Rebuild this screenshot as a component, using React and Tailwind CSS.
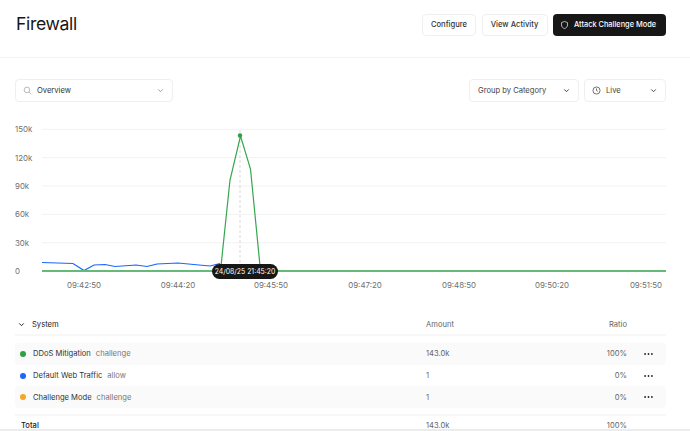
import React from "react";

const font = { fontFamily: "Inter, 'Liberation Sans', sans-serif" };
const ys = [["150k", 129.3], ["120k", 157.7], ["90k", 186], ["60k", 214.3], ["30k", 242.7], ["0", 271]];
const xs = [["09:42:50", 84], ["09:44:20", 178], ["09:45:50", 271], ["09:47:20", 365], ["09:48:50", 459], ["09:50:20", 552], ["09:51:50", 646]];
const rows = [
  { dot: "bg-[#2ea043]", name: "DDoS Mitigation", tag: "challenge", amount: "143.0k", ratio: "100%", shade: true },
  { dot: "bg-[#1a66ff]", name: "Default Web Traffic", tag: "allow", amount: "1", ratio: "0%", shade: false },
  { dot: "bg-[#f5a623]", name: "Challenge Mode", tag: "challenge", amount: "1", ratio: "0%", shade: true },
];

function Chevron({ className }) {
  return (
    <svg viewBox="0 0 10 10" className={className} fill="none" stroke="currentColor" strokeWidth="1.1">
      <path d="M2.5 3.8 5 6.3 7.5 3.8" />
    </svg>
  );
}

function Dots() {
  return (
    <svg viewBox="0 0 10 4" className="w-[9px] h-[4px] text-[#222]" fill="currentColor">
      <circle cx="1.2" cy="2" r="1" />
      <circle cx="5" cy="2" r="1" />
      <circle cx="8.8" cy="2" r="1" />
    </svg>
  );
}

function Chart() {
  return (
    <svg width="690" height="180" viewBox="0 120 690 180" className="block" style={font}>
      {ys.map(([l, y]) => (
        <g key={l}>
          <line x1="42" x2="666" y1={y} y2={y} stroke="#f2f2f2" strokeWidth="1" />
          <text x="15" y={y + 3} fontSize="7.9" fill="#707070">{l}</text>
        </g>
      ))}
      {xs.map(([l, x]) => (
        <text key={l} x={x} y="288" fontSize="7.9" textAnchor="middle" fill="#707070">{l}</text>
      ))}
      <line x1="240" x2="240" y1="130" y2="264" stroke="#d9d9d9" strokeWidth="1" strokeDasharray="3 2" />
      <polyline
        fill="none"
        stroke="#1a66ff"
        strokeWidth="1.2"
        points="42,262.5 73,263.5 84,270.5 94,265 105,264.5 115,266.5 136,265 147,266.5 157,264 178,263 199,265 210,266 220,263.5"
      />
      <polyline
        fill="none"
        stroke="#35a64c"
        strokeWidth="1.2"
        points="220.5,271 230,180 240.5,136 250.5,169 260.5,271"
      />
      <line x1="42" x2="666" y1="271" y2="271" stroke="#66ba78" strokeWidth="2" />
      <circle cx="240" cy="135.5" r="2.2" fill="#2ea043" />
    </svg>
  );
}

export default function App() {
  return (
    <div className="relative w-[690px] h-[431px] overflow-hidden bg-white text-[#171717]" style={font}>
      <header className="h-[58px] border-b border-[#f2f2f2] pl-4 pr-6 flex items-start justify-between">
        <h1 className="text-[17.6px] leading-[24px] mt-[12px] font-normal tracking-[-0.02em]">Firewall</h1>
        <div className="flex items-center gap-[5.5px] mt-[14px]">
          <button className="w-[54px] h-[22px] rounded border border-[#efefef] text-[7.6px] font-medium text-[#333]">Configure</button>
          <button className="w-[66px] h-[22px] rounded border border-[#efefef] text-[7.6px] font-medium text-[#333]">View Activity</button>
          <button className="w-[113px] h-[22px] rounded bg-[#171717] text-white text-[7.4px] font-medium flex items-center pl-[7px] gap-[5px] whitespace-nowrap">
            <svg viewBox="0 0 24 24" className="w-[9px] h-[10px] shrink-0" fill="none" stroke="#d4d4d4" strokeWidth="2.2">
              <path d="M12 2.5 4 5.5v6.5c0 5 3.5 8 8 9.5 4.5-1.5 8-4.5 8-9.5V5.5z" />
            </svg>
            Attack Challenge Mode
          </button>
        </div>
      </header>

      <div className="flex items-center justify-between pl-[15px] pr-6 mt-[21px]">
        <div className="w-[158px] h-[23px] rounded border border-[#efefef] flex items-center pl-[7px] pr-[7px] text-[7.6px] text-[#333]">
          <svg viewBox="0 0 24 24" className="w-[9px] h-[9px] text-[#999] mr-[5px]" fill="none" stroke="currentColor" strokeWidth="1.8">
            <circle cx="10.5" cy="10.5" r="7.5" />
            <path d="m16 16 6 6" />
          </svg>
          <span>Overview</span>
          <Chevron className="w-[9px] h-[9px] ml-auto text-[#999]" />
        </div>
        <div className="flex gap-[5px]">
          <div className="w-[110px] h-[23px] rounded border border-[#efefef] flex items-center pl-[8px] pr-[7px] text-[7.6px] text-[#444]">
            <span>Group by Category</span>
            <Chevron className="w-[9px] h-[9px] ml-auto text-[#444]" />
          </div>
          <div className="w-[82px] h-[23px] rounded border border-[#efefef] flex items-center pl-[7px] pr-[7px] text-[7.6px] text-[#444]">
            <svg viewBox="0 0 24 24" className="w-[9px] h-[9px] mr-[5px]" fill="none" stroke="#444" strokeWidth="2">
              <circle cx="12" cy="12" r="9.5" />
              <path d="M12 6.5V12l3.5 2" />
            </svg>
            <span>Live</span>
            <Chevron className="w-[9px] h-[9px] ml-auto text-[#444]" />
          </div>
        </div>
      </div>

      <div className="relative mt-[18px] h-[180px]">
        <Chart />
        <div className="absolute left-[212px] top-[144px] w-[66px] h-[15px] rounded-full bg-[#171717] text-white text-[6.9px] leading-[15px] text-center whitespace-nowrap">
          24/08/25 21:45:20
        </div>
      </div>

      <section className="ml-[15px] w-[651px] mt-[16px]">
        <div className="h-[20px] border-b-2 border-[#f7f7f7] grid grid-cols-[411px_1fr_39px] items-center text-[7.6px]">
          <div className="flex items-center">
            <Chevron className="w-[9px] h-[9px] ml-[2px] mr-[6px] text-[#222]" />
            <span className="text-[#222]">System</span>
          </div>
          <div className="flex justify-between text-[#666]">
            <span>Amount</span>
            <span>Ratio</span>
          </div>
        </div>
        <div className="mt-[7px]">
          {rows.map((r) => (
            <div
              key={r.name}
              className={`h-[21.7px] rounded grid grid-cols-[411px_1fr_39px] items-center text-[7.6px] ${r.shade ? "bg-[#fafafa]" : ""}`}
            >
              <div className="flex items-center">
                <span className={`w-[6px] h-[6px] rounded-full ml-[5px] mr-[7px] ${r.dot}`} />
                <span className="text-[#333]">{r.name}</span>
                <span className="ml-[5px] text-[#777]">{r.tag}</span>
              </div>
              <div className="flex justify-between text-[#666]">
                <span>{r.amount}</span>
                <span>{r.ratio}</span>
              </div>
              <div className="flex justify-center pl-[3px]">
                <Dots />
              </div>
            </div>
          ))}
        </div>
        <div className="mt-[6px] h-[22px] border-t-2 border-[#f7f7f7] grid grid-cols-[411px_1fr_39px] items-center text-[7.6px]">
          <span className="pl-[6px] text-[#222] font-medium">Total</span>
          <div className="flex justify-between text-[#666]">
            <span>143.0k</span>
            <span>100%</span>
          </div>
        </div>
      </section>
      <div className="absolute left-0 right-0 top-[429px] h-[2px] bg-[#ececec]" />
    </div>
  );
}
